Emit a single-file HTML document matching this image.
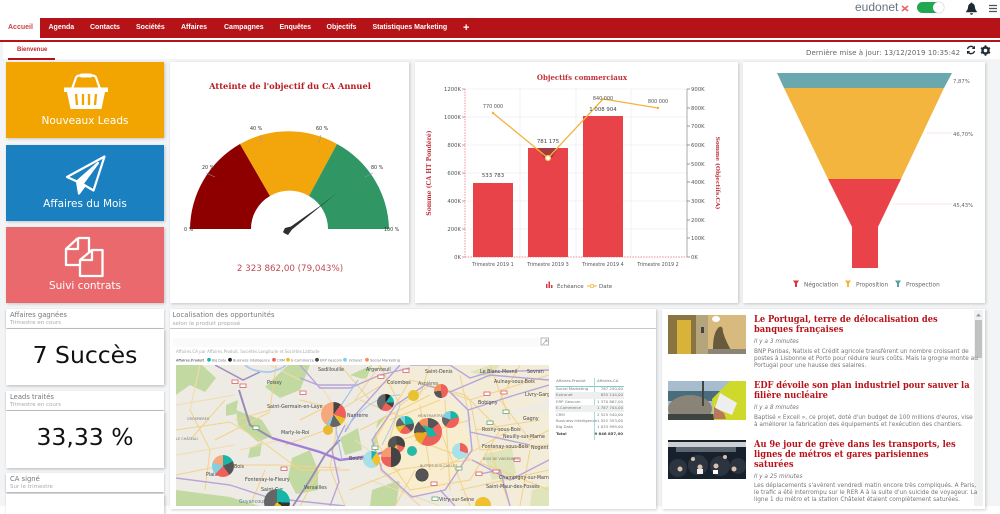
<!DOCTYPE html>
<html lang="fr"><head><meta charset="utf-8"><title>Eudonet</title>
<style>
*{box-sizing:border-box}
html,body{margin:0;padding:0;width:1000px;height:506px;overflow:hidden;background:#fff;font-family:"DejaVu Sans","Liberation Sans",sans-serif}
.a{position:absolute}
.t{position:absolute;white-space:nowrap}
.tab{position:absolute;top:18px;height:20px;color:#fff;font:bold 7px/20px "Liberation Sans",sans-serif;white-space:nowrap}
.card{position:absolute;background:#fff;box-shadow:1px 1px 3px rgba(0,0,0,.2)}
.tile{position:absolute;left:6px;width:158px;height:76px;box-shadow:1px 1px 3px rgba(0,0,0,.2);color:#fff;text-align:center;font-size:10.5px}
.tile span{position:absolute;left:0;right:0;top:53px}
.kh{position:absolute;left:6px;width:158px;height:19px;background:#fff;box-shadow:0 1px 2px rgba(0,0,0,.3)}
.kh b{position:absolute;left:4px;top:1.5px;font:normal 6.8px "DejaVu Sans",sans-serif;color:#777;white-space:nowrap}
.kh i{position:absolute;left:4px;top:11px;font:normal 5.5px "DejaVu Sans",sans-serif;color:#aaa;white-space:nowrap}
.kb{position:absolute;left:6px;width:158px;background:#fff;box-shadow:1px 1px 3px rgba(0,0,0,.25);text-align:center;color:#111;font-size:23.5px}
.p{position:absolute;border-radius:50%}
.nt{position:absolute;left:754px;font:bold 9.6px/10px "DejaVu Serif",serif;color:#b81219;white-space:nowrap;transform:scaleX(.865);transform-origin:left center}
.nd{position:absolute;left:754px;font:italic 5.8px "DejaVu Sans",sans-serif;color:#777;white-space:nowrap}
.nx{position:absolute;left:754px;width:217px;font:5.8px/7px "DejaVu Sans",sans-serif;color:#777;white-space:nowrap}
svg text{font-family:"DejaVu Sans",sans-serif}
.tr{position:absolute;left:555px;width:69px;height:6.4px;font:3.9px/6.4px "DejaVu Sans",sans-serif;color:#777;padding-left:1px;white-space:nowrap}
.tr u{position:absolute;right:1px;text-decoration:none}
</style></head><body>

<!-- top header -->
<div class="t" style="left:855px;top:0;font:12px/15px 'Liberation Sans',sans-serif;color:#68747c">eudonet</div>
<svg class="a" style="left:900px;top:3px" width="10" height="10"><path d="M2 3 8 8M8 3 2 8" stroke="#e8636a" stroke-width="1.6"/></svg>
<div class="a" style="left:917px;top:2px;width:27px;height:11px;border-radius:6px;background:#1fa84f"></div>
<div class="a" style="left:933px;top:2px;width:11px;height:11px;border-radius:50%;background:#fff;box-shadow:0 0 1px #888"></div>
<svg class="a" style="left:965px;top:2px" width="13" height="13" viewBox="0 0 13 13"><path d="M6.5 0.5c.7 0 1 .5 1 1 2 .6 2.300 2.300 2.500 4 .2 1.700.8 2.800 1.800 3.800v1H1.200v-1c1-1 1.600-2.100 1.800-3.800.2-1.700.5-3.400 2.500-4 0-.5.3-1 1-1zM5 11.200h3c0 1-.7 1.500-1.500 1.500S5 12.200 5 11.200z" fill="#1d2a33"/></svg>
<svg class="a" style="left:988px;top:4px" width="10" height="9"><path d="M1 1.500h8M1 4.500h8M1 7.500h8" stroke="#4a5358" stroke-width="1.300"/></svg>

<!-- nav -->
<div class="a" style="left:0;top:18px;width:1000px;height:20px;background:#b51317"></div>
<div class="a" style="left:0;top:18px;width:40px;height:20px;background:#fff"></div>
<div class="a" style="left:0;top:40px;width:1000px;height:1.500px;background:#b51317"></div>
<div class="tab" style="left:8px;color:#c6484c">Accueil</div>
<div class="tab" style="left:48.500px">Agenda</div>
<div class="tab" style="left:90px">Contacts</div>
<div class="tab" style="left:136px">Sociétés</div>
<div class="tab" style="left:181px">Affaires</div>
<div class="tab" style="left:224px">Campagnes</div>
<div class="tab" style="left:279.500px">Enquêtes</div>
<div class="tab" style="left:326.500px">Objectifs</div>
<div class="tab" style="left:372.500px">Statistiques Marketing</div>
<div class="tab" style="left:463px;font-size:11px">+</div>

<!-- content background -->
<div class="a" style="left:0;top:42px;width:1000px;height:464px;background:#f3f4f6"></div>
<div class="a" style="left:3px;top:42px;width:997px;height:17px;background:#fff"></div>
<div class="t" style="left:17px;top:47px;font:bold 6px 'Liberation Sans',sans-serif;color:#c0272d">Bienvenue</div>
<div class="a" style="left:8px;top:58px;width:47px;height:1.500px;background:#b51317"></div>
<div class="t" style="left:806px;top:47.500px;font-size:7.050px;color:#666;letter-spacing:.08px">Dernière mise à jour: 13/12/2019 10:35:42</div>
<svg class="a" style="left:966px;top:45px" width="10" height="10" viewBox="0 0 10 10"><path d="M1.500 4A3.600 3.600 0 0 1 8 3M8.500 6A3.600 3.600 0 0 1 2 7" fill="none" stroke="#1d2a33" stroke-width="1.400"/><path d="M9 .8V4H5.800zM1 9.200V6h3.200z" fill="#1d2a33"/></svg>
<svg class="a" style="left:980px;top:45px" width="11" height="11" viewBox="0 0 11 11"><circle cx="5.500" cy="5.500" r="3.100" fill="none" stroke="#1d2a33" stroke-width="2.200"/><path d="M5.500 .3v10.400M1 2.900l9 5.200M1 8.100l9-5.200" stroke="#1d2a33" stroke-width="1.700"/><circle cx="5.500" cy="5.500" r="1.800" fill="#fff"/></svg>

<!-- tiles -->
<div class="tile" style="top:62px;background:#f2a500"><span>Nouveaux Leads</span>
<svg class="a" style="left:57px;top:10px" width="46" height="40" viewBox="0 0 46 40"><path d="M9 17 13 5.500Q14 3.500 17 3.500H29Q32 3.500 33 5.500L37 17" fill="none" stroke="#fff" stroke-width="2.200"/><rect x="17" y="1.500" width="12" height="4" rx="1.500" fill="#fff"/><path d="M1 15.500H45V20H42L38.500 37H7.500L4 20H1z" fill="#fff"/><path d="M13 22 14 33M20 22V33M26 22V33M33 22 32 33" stroke="#f2a500" stroke-width="2.300"/></svg></div>
<div class="tile" style="top:144.500px;background:#1a80bf"><span>Affaires du Mois</span>
<svg class="a" style="left:58px;top:10px" width="42" height="40" viewBox="0 0 42 40"><path d="M40.500 1.500 3 22 13 26.500 34 8 18.500 29 29.500 35.500zM13 26.500 15 38.500 20.500 31 18.500 29" fill="#fff" fill-opacity="0" stroke="#fff" stroke-width="2.200" stroke-linejoin="round"/><path d="M13 26.500 15 38.500 20.500 31 18.500 29 34 8z" fill="#fff"/></svg></div>
<div class="tile" style="top:227px;background:#e9696c"><span>Suivi contrats</span>
<svg class="a" style="left:58px;top:9px" width="42" height="42" viewBox="0 0 42 42"><path d="M14 2H25V18M14 2 2 13V29H15M14 2V13H2" fill="none" stroke="#fff" stroke-width="2.300" stroke-linejoin="round"/><path d="M28 14H38.500V40H16V24zM28 14V24H16" fill="#e9696c" stroke="#fff" stroke-width="2.300" stroke-linejoin="round"/></svg></div>

<!-- gauge -->
<div class="card" style="left:170px;top:62px;width:239px;height:241px"></div>
<svg class="a" style="left:170px;top:62px" width="240" height="242" viewBox="170 62 240 242">
<text x="290" y="89" text-anchor="middle" style="font:bold 8.300px 'DejaVu Serif',serif" fill="#b81b22">Atteinte de l'objectif du CA Annuel</text>
<path d="M190 229A99 99 0 0 1 240 144L270 196A38 38 0 0 0 251 229Z" fill="#8e0000"/>
<path d="M240 144A99 99 0 0 1 337 144L309 196A38 38 0 0 0 270 196Z" fill="#f2a60b"/>
<path d="M337 144A99 99 0 0 1 389 229H328A38 38 0 0 0 309 196Z" fill="#2f9664"/>
<path d="M261 135 261 143M321 135 319 143M206 173 215 177M373 173 365 177" stroke="#999" stroke-width=".6" fill="none"/>
<g font-size="4.800" fill="#333"><text x="184" y="231">0 %</text><text x="202" y="169">20 %</text><text x="250" y="130">40 %</text><text x="316" y="130">60 %</text><text x="371" y="169">80 %</text><text x="384" y="231">100 %</text></g>
<path d="M337 193 292 229.500 288 235 284 233 283 232 285 228 291 226.500 320 206z" fill="#2e2e2e"/>
<text x="290" y="271" text-anchor="middle" font-size="8.700" fill="#bf4a52">2 323 862,00 (79,043%)</text>
</svg>

<!-- bar chart -->
<div class="card" style="left:415px;top:62px;width:323px;height:241px"></div>
<svg class="a" style="left:415px;top:62px" width="324" height="242" viewBox="415 62 324 242">
<text x="582" y="80" text-anchor="middle" style="font:bold 7px 'DejaVu Serif',serif" fill="#c0333a">Objectifs commerciaux</text>
<g stroke="#eceff2" stroke-width=".8"><path d="M465 89H687M465 117H687M465 145H687M465 173H687M465 201H687M465 229H687M520 89V257M576 89V257M631 89V257M687 89V257"/></g>
<path d="M465 89V257M465 257H687" stroke="#e06670" stroke-width=".7" stroke-dasharray="1.500 1.200" fill="none"/>
<path d="M687 89V257" stroke="#999" stroke-width=".8"/>
<path d="M462 89h3M462 117h3M462 145h3M462 173h3M462 201h3M462 229h3M462 257h3" stroke="#e06670" stroke-width=".7"/>
<path d="M687 89h3M687 108h3M687 126h3M687 145h3M687 164h3M687 182h3M687 201h3M687 220h3M687 238h3M687 257h3" stroke="#777" stroke-width=".7"/>
<rect x="473" y="183" width="40" height="74" fill="#e9434a"/><rect x="528" y="148" width="40" height="109" fill="#e9434a"/><rect x="583" y="116" width="40" height="141" fill="#e9434a"/>
<path d="M538 148H558L552 158H544z" fill="#a73a3c"/>
<path d="M493 113 548 158 603 99 658 108" fill="none" stroke="#f2b33d" stroke-width="1.300"/>
<circle cx="493" cy="113" r="1.200" fill="#f2b33d"/><circle cx="603" cy="99" r="1.200" fill="#f2b33d"/><circle cx="658" cy="108" r="1.200" fill="#f2b33d"/>
<circle cx="548" cy="158" r="2.500" fill="#fff" stroke="#f2c25a" stroke-width="1.200"/>
<g font-size="5.300" fill="#555" text-anchor="end"><text x="461" y="91">1200K</text><text x="461" y="119">1000K</text><text x="461" y="147">800K</text><text x="461" y="175">600K</text><text x="461" y="203">400K</text><text x="461" y="231">200K</text><text x="461" y="259">0K</text></g>
<g font-size="5.300" fill="#555"><text x="691" y="91">900K</text><text x="691" y="110">800K</text><text x="691" y="128">700K</text><text x="691" y="147">600K</text><text x="691" y="166">500K</text><text x="691" y="184">400K</text><text x="691" y="203">300K</text><text x="691" y="222">200K</text><text x="691" y="240">100K</text><text x="691" y="259">0K</text></g>
<g font-size="4.900" fill="#555" text-anchor="middle"><text x="493" y="266">Trimestre 2019 1</text><text x="548" y="266">Trimestre 2019 3</text><text x="603" y="266">Trimestre 2019 4</text><text x="658" y="266">Trimestre 2019 2</text>
<text x="493" y="108">770 000</text><text x="603" y="100">840 000</text><text x="658" y="103">800 000</text></g>
<g font-size="5.400" fill="#444" text-anchor="middle"><text x="493" y="177">533 783</text><text x="548" y="143">781 175</text><text x="603" y="111">1 008 904</text></g>
<text transform="translate(431 173) rotate(-90)" text-anchor="middle" style="font:bold 6.100px 'DejaVu Serif',serif" fill="#c0333a">Somme (CA HT Pondéré)</text>
<text transform="translate(716 173) rotate(90)" text-anchor="middle" style="font:bold 5.900px 'DejaVu Serif',serif" fill="#c0333a">Somme (Objectifs.CA)</text>
<path d="M546 288V284h1.500v4zM548.500 288V281.500H550V288zM551 288V285h1.500v3z" fill="#d8353d"/>
<text x="557" y="288" font-size="5.500" fill="#555">Échéance</text>
<path d="M587 286H597" stroke="#f2b33d" stroke-width="1"/><circle cx="592" cy="286" r="1.600" fill="#fff" stroke="#f2b33d" stroke-width=".8"/>
<text x="599" y="288" font-size="5.500" fill="#555">Date</text>
</svg>

<!-- funnel -->
<div class="card" style="left:743px;top:62px;width:242px;height:241px"></div>
<svg class="a" style="left:743px;top:62px" width="243" height="242" viewBox="743 62 243 242">
<path d="M777 73H952L944 88H784z" fill="#6aa8ad"/>
<path d="M784 88H944L901 179H828z" fill="#f4b53e"/>
<path d="M828 179H901L878 227V268H852V227z" fill="#ea4249"/>
<path d="M926 133H952M893 204H952" stroke="#f3c9c3" stroke-width=".6"/>
<g font-size="5.300" fill="#666"><text x="953" y="83">7,87%</text><text x="953" y="136">46,70%</text><text x="953" y="207">45,43%</text></g>
<path d="M793 280.500h6l-2 3v3.500h-2v-3.500z" fill="#d8353d"/><path d="M845 280.500h6l-2 3v3.500h-2v-3.500z" fill="#f4b53e"/><path d="M895 280.500h6l-2 3v3.500h-2v-3.500z" fill="#5c9da3"/>
<g font-size="5.800" fill="#666"><text x="804" y="286.500">Négociation</text><text x="856" y="286.500">Proposition</text><text x="906" y="286.500">Prospection</text></g>
</svg>

<!-- KPI -->
<div class="kh" style="top:309px"><b>Affaires gagnées</b><i>Trimestre en cours</i></div>
<div class="kb" style="top:329px;height:56px;line-height:53px">7 Succès</div>
<div class="kh" style="top:391px"><b>Leads traités</b><i>Trimestre en cours</i></div>
<div class="kb" style="top:411px;height:57px;line-height:53px">33,33 %</div>
<div class="kh" style="top:473px"><b>CA signé</b><i>Sur le trimestre</i></div>
<div class="kb" style="top:494px;height:20px"></div>

<!-- map panel -->
<div class="card" style="left:170px;top:309px;width:486px;height:200px"></div>
<div class="a" style="left:170px;top:328px;width:486px;height:1px;background:#c8c8c8"></div>
<div class="t" style="left:172.500px;top:310.500px;font-size:6.750px;color:#777;letter-spacing:.1px">Localisation des opportunités</div>
<div class="t" style="left:172.500px;top:320.500px;font-size:5.600px;color:#aaa">selon le produit proposé</div>
<div class="a" style="left:173px;top:338px;width:366px;height:9px;background:#fafafa"></div>
<svg class="a" style="left:540px;top:337px" width="10" height="10"><rect x="1" y="1" width="7.500" height="7" fill="none" stroke="#999" stroke-width=".7"/><path d="M3 7 7 3M5 3H7V5" stroke="#999" stroke-width=".7" fill="none"/></svg>
<div class="t" style="left:176px;top:349px;font-size:4px;color:#aaa">Affaires.CA par Affaires.Produit, Sociétés.Longitude et Sociétés.Latitude</div>
<svg class="a" style="left:175px;top:356px" width="240" height="8"><g font-size="3.700" fill="#777"><text x="1" y="5.300" font-weight="bold" textLength="28" lengthAdjust="spacingAndGlyphs">Affaires.Produit</text><circle cx="34" cy="3.800" r="1.900" fill="#16b6a8"/><text x="37" y="5.300" textLength="14" lengthAdjust="spacingAndGlyphs">Big Data</text><circle cx="55" cy="3.800" r="1.900" fill="#222"/><text x="58" y="5.300" textLength="37" lengthAdjust="spacingAndGlyphs">Business Intelligence</text><circle cx="99" cy="3.800" r="1.900" fill="#f0605a"/><text x="102" y="5.300" textLength="8" lengthAdjust="spacingAndGlyphs">CRM</text><circle cx="113" cy="3.800" r="1.900" fill="#e6c229"/><text x="116" y="5.300" textLength="23" lengthAdjust="spacingAndGlyphs">E-Commerce</text><circle cx="142" cy="3.800" r="1.900" fill="#444"/><text x="145" y="5.300" textLength="22" lengthAdjust="spacingAndGlyphs">ERP Gescom</text><circle cx="170" cy="3.800" r="1.900" fill="#7fd0e0"/><text x="174" y="5.300" textLength="13" lengthAdjust="spacingAndGlyphs">Extranet</text><circle cx="192" cy="3.800" r="1.900" fill="#f58e5d"/><text x="195" y="5.300" textLength="30" lengthAdjust="spacingAndGlyphs">Social Marketing</text></g></svg>

<!-- map -->
<svg class="a" style="left:176px;top:365px;filter:blur(.35px)" width="373" height="141" viewBox="176 365 373 141">
<rect x="176" y="365" width="373" height="141" fill="#eeebe4"/>
<g fill="#c2daa1">
<path d="M176 365H202L216 378 205 392 190 385 176 395z"/>
<path d="M265 387 288 365H310L300 390 280 398z"/>
<path d="M236 410 262 420 272 436 258 442 238 425z"/>
<path d="M292 458 310 450 318 470 318 490 296 494 288 478z"/>
<path d="M176 490 230 497 260 506H176z"/>
<path d="M378 420 392 412 386 440 372 446z"/>
<path d="M340 438 358 428 362 450 345 455z"/>
<path d="M372 490 400 480 396 506H370z"/>
<path d="M532 490 549 486V506H530z"/>
<path d="M470 372 490 365H500L490 378z"/>
<path d="M484 454 512 448 516 474 492 480z"/>
<path d="M250 448 262 442 260 456 248 458z"/>
<path d="M226 405 238 400 236 414 226 416z"/>
<path d="M350 375 372 365 366 380z"/>
</g>
<g fill="#f8edcf"><path d="M398 402 430 395 462 412 470 445 450 490 415 495 385 470 375 430z"/><path d="M355 380 420 365 549 365V400L480 420 400 400z" opacity=".55"/><path d="M470 420 549 410V506H450z" opacity=".55"/></g>
<g fill="none" stroke="#f3d28a" stroke-width="1">
<path d="M176 430 230 422 260 440 300 470 350 470"/><path d="M176 475 225 465 280 465 340 468"/><path d="M276 365 270 410 235 420"/><path d="M380 365 400 405 430 385 470 400 549 375"/><path d="M400 405 380 470 420 506"/><path d="M470 400 480 450 549 445"/><path d="M415 440 500 470 549 490"/><path d="M340 408 330 468 345 506"/><path d="M300 400 340 410 390 380"/><path d="M440 430 470 506"/><path d="M415 470 395 506"/><path d="M500 400 530 440 549 430"/><path d="M430 395 360 430"/><path d="M440 470 510 430"/>
<path d="M410 380 465 395 500 430 470 480 410 490 375 440z"/>
<path d="M190 410 210 450 205 490M225 400 190 440M215 440 270 412M300 420 330 405M285 445 340 425M265 470 250 506M320 470 300 506M350 490 400 470M360 400 410 420M390 420 440 400M400 440 470 420M420 405 430 470M445 400 450 490M395 470 470 460M460 375 470 420M490 365 510 420M520 365 500 400M475 430 540 420M490 450 510 506M530 450 520 506M460 490 549 470M380 365 355 400M340 365 370 400M430 365 420 395"/>
<path d="M176 405 235 395M200 365 190 410M176 455 235 445M240 450 280 440M300 380 270 365M320 385 350 430M355 440 395 470M370 480 440 506" stroke="#f1dcab"/>
</g>
<g fill="none" stroke="#b7a5da" stroke-width="1.400">
<path d="M176 478 230 485 270 498 345 506"/><path d="M300 365 320 388 350 388 380 375 410 368"/><path d="M345 425 332 450 339 482 330 506"/><path d="M356 385 318 385 300 378"/><path d="M410 365 450 365 470 378 490 372 549 370"/><path d="M400 365 355 415 345 432"/>
<path d="M396 405 425 385 450 392 468 410 472 450 445 490 412 497 382 470 372 440z"/>
<path d="M450 392 490 375 549 380"/><path d="M468 410 515 395 549 385"/><path d="M470 432 530 445M472 460 510 480 549 460"/>
<path d="M440 490 455 506M475 475 500 470 510 506"/>
</g>
<path d="M215 365 243 380 260 372" fill="none" stroke="#9c8dc4" stroke-width="1.500"/>
<path d="M239 390 250 425 272 438" fill="none" stroke="#9a8ab5" stroke-width="2"/>
<path d="M272 438 320 452 340 460 370 456 385 452" fill="none" stroke="#a37ed6" stroke-width="2.400"/>
<path d="M293 506 310 480 325 455 340 440" fill="none" stroke="#9a8ab5" stroke-width="1.800"/>
<path d="M342 460 336 430 338 410 358 380" fill="none" stroke="#9cc0ec" stroke-width="1.100"/>
<path d="M245 365Q252 372 270 372 285 368 285 365" fill="none" stroke="#a9c9ef" stroke-width="1.800"/>
<path d="M345 430Q370 395 400 395 M382 445Q395 420 400 405" fill="none" stroke="#a9c9ef" stroke-width="1"/>
<g fill="#fff" stroke="#d9606a" stroke-width=".8"><rect x="232" y="380" width="6" height="3.500"/><rect x="240" y="384" width="6" height="3.500"/><rect x="300" y="391" width="6" height="3.500"/><rect x="378" y="375" width="6" height="3.500"/><rect x="403" y="369" width="6" height="3.500"/><rect x="281" y="467" width="6" height="3.500"/><rect x="484" y="392" width="6" height="3.500"/><rect x="501" y="391" width="6" height="3"/><rect x="514" y="458" width="6" height="3.500"/><rect x="476" y="472" width="6" height="3.500"/><rect x="493" y="470" width="6" height="3"/><rect x="431" y="482" width="6" height="3.500"/></g>
<g fill="#fff" stroke="#6aa56b" stroke-width=".8"><rect x="253" y="426" width="6" height="3.500"/><rect x="372" y="446" width="6" height="3.500"/><rect x="503" y="410" width="6" height="3.500"/><rect x="487" y="421" width="6" height="3.500"/><rect x="456" y="467" width="6" height="3"/><rect x="432" y="497" width="6" height="3.500"/></g>
<g font-size="4.800" fill="#444">
<text x="318" y="371">Sadillouille</text><text x="366" y="371">Argenteuil</text><text x="267" y="384">Poissy</text><text x="267" y="408">Saint-Germain-en-Laye</text><text x="281" y="434">Marly-le-Roi</text><text x="347" y="417">Nanterre</text><text x="349" y="460">Boulogne</text><text x="234" y="468">Bois</text><text x="206" y="476">Plaisir</text><text x="245" y="481">Fontenay-le-Fleury</text><text x="261" y="491">Saint-Cyr</text><text x="304" y="489">Versailles</text><text x="239" y="503" fill="#5c7fa5">Guyancourt</text><text x="425" y="373">Saint-Denis</text><text x="480" y="373">Le Blanc-Mesnil</text><text x="527" y="373">Sevran</text><text x="494" y="383">Aulnay-sous-Bois</text><text x="478" y="404">Bobigny</text><text x="525" y="396">Livry-Gargan</text><text x="482" y="431">Rosny-sous-Bois</text><text x="503" y="438">Neuilly-sur-Marne</text><text x="482" y="448">Fontenay-sous-Bois</text><text x="531" y="449">Nogent</text><text x="499" y="479">Champigny-sur-Marne</text><text x="486" y="488">Saint-Maur-des-Fossés</text><text x="439" y="501">Vitry-sur-Seine</text><text x="387" y="384">Colombes</text><text x="418" y="385" fill="#666">Asnières</text><text x="523" y="420">Gagny</text></g>
<g font-size="3.500" fill="#777"><text x="187" y="420">CROSPIERES</text><text x="176" y="440">LE CHÂTEAU</text><text x="418" y="417">MONTMARTRE</text><text x="420" y="467">BUTTES-AUX-CAILLES</text><text x="483" y="460">BOIS DE VINCENNES</text></g>
</svg>
<div class="a" style="left:176px;top:365px;width:373px;height:141px;overflow:hidden">
<div class="p" style="left:145px;top:37px;width:25px;height:25px;background:conic-gradient(#444 0 10%,#f0605a 10% 30%,#e6c229 30% 40%,#666 40% 55%,#7fd0e0 55% 60%,#f7a77c 60% 100%)"></div>
<div class="p" style="left:147px;top:60px;width:10px;height:10px;background:#eab92d"></div>
<div class="p" style="left:201px;top:29px;width:17px;height:17px;background:conic-gradient(#222 0 10%,#16b6a8 10% 25%,#444 25% 35%,#f0605a 35% 58%,#666 58% 100%)"></div>
<div class="p" style="left:232px;top:25px;width:11px;height:11px;background:#eac12f"></div>
<div class="p" style="left:258px;top:19px;width:14px;height:14px;background:conic-gradient(#f0605a 0 48%,#555 48% 74%,#f58e5d 74% 100%)"></div>
<div class="p" style="left:220px;top:51px;width:18px;height:18px;background:conic-gradient(#16b6a8 0 22%,#555 22% 38%,#f0605a 38% 60%,#e6c229 60% 72%,#666 72% 90%,#7fd0e0 90% 100%)"></div>
<div class="p" style="left:266px;top:46px;width:17px;height:17px;background:conic-gradient(#16b6a8 0 20%,#f0605a 20% 60%,#666 60% 80%,#7fd0e0 80% 100%)"></div>
<div class="p" style="left:238px;top:53px;width:28px;height:28px;background:conic-gradient(#555 0 14%,#f0605a 14% 58%,#e8a81f 58% 74%,#555 74% 88%,#f58e5d 88% 100%)"></div>
<div class="a" style="left:247px;top:60px;width:14px;height:12px;background:#16b6a8;clip-path:polygon(0 0,70% 30%,100% 90%,40% 100%)"></div>
<div class="p" style="left:276px;top:78px;width:16px;height:16px;background:conic-gradient(#f0605a 0 30%,#a9e1ea 30% 100%)"></div>
<div class="p" style="left:231px;top:81px;width:10px;height:10px;background:#28b9a6"></div>
<div class="p" style="left:212px;top:71px;width:17px;height:17px;background:conic-gradient(#444 0 30%,#f0605a 30% 45%,#e6c229 45% 60%,#555 60% 100%)"></div>
<div class="p" style="left:205px;top:82px;width:20px;height:20px;background:conic-gradient(#444 0 50%,#f0605a 50% 75%,#f59a70 75% 100%)"></div>
<div class="p" style="left:187px;top:86px;width:17px;height:17px;background:conic-gradient(#16b6a8 0 10%,#f2c22c 10% 40%,#a9dfe9 40% 100%)"></div>
<div class="p" style="left:240px;top:104px;width:12px;height:12px;background:#555;box-shadow:0 0 0 .5px #333"></div>
<div class="p" style="left:36px;top:90px;width:22px;height:22px;background:conic-gradient(#16b6a8 0 18%,#555 18% 40%,#f0605a 40% 62%,#7fd0e0 62% 80%,#f7a77c 80% 100%)"></div>
<div class="p" style="left:88px;top:124px;width:26px;height:26px;background:conic-gradient(#16b6a8 0 26%,#333 26% 36%,#e6c229 36% 60%,#666 60% 100%)"></div>
<div class="p" style="left:299px;top:132px;width:16px;height:16px;background:#f0c12f"></div>
</div>

<!-- table -->
<div class="t" style="left:556px;top:378px;font-size:3.900px;color:#777">Affaires.Produit</div>
<div class="t" style="left:597px;top:378px;font-size:3.900px;color:#777">Affaires.CA</div>
<div class="a" style="left:555px;top:385.500px;width:69px;height:.8px;background:#7fcfc9"></div>
<div class="a" style="left:594px;top:378px;width:.7px;height:62px;background:#a8dcd8"></div>
<div class="tr" style="top:386px">Social Marketing<u>767 250,00</u></div>
<div class="tr" style="top:392.400px;background:#eef0f0">Extranet<u>855 144,00</u></div>
<div class="tr" style="top:398.800px">ERP Gescom<u>1 370 867,00</u></div>
<div class="tr" style="top:405.200px;background:#eef0f0">E-Commerce<u>1 787 704,00</u></div>
<div class="tr" style="top:411.600px">CRM<u>2 525 540,00</u></div>
<div class="tr" style="top:418px">Business Intelligence<u>1 552 353,00</u></div>
<div class="tr" style="top:424.400px">Big Data<u>1 033 999,00</u></div>
<div class="tr" style="top:430.800px;font-weight:bold;color:#444">Total<u>9 846 857,00</u></div>

<!-- news -->
<div class="card" style="left:662px;top:309px;width:323px;height:200px"></div>
<div class="a" style="left:974px;top:310px;width:9px;height:196px;background:#f1f1f1"></div>
<div class="a" style="left:975px;top:320px;width:7px;height:38px;background:#c1c1c1"></div>
<svg class="a" style="left:976px;top:313px" width="5" height="4"><path d="M0 3.500 2.500 .5 5 3.500z" fill="#999"/></svg>

<svg class="a" style="left:668px;top:315px" width="78" height="39" viewBox="0 0 78 39"><rect width="78" height="39" fill="#d8b97e"/><rect width="32" height="39" fill="#8a7442"/><rect x="9" y="5" width="14" height="34" fill="#d9b23a"/><rect x="28" y="0" width="12" height="39" fill="#b5a57c"/><rect x="33" y="12" width="3" height="6" fill="#444"/><ellipse cx="48" cy="4" rx="4" ry="3" fill="#fff"/><path d="M45 37C45 25 46 18 50 13 53 10 55 12 55 17 57 24 60 30 64 37z" fill="#6a5a3c"/><path d="M40 34H78V39H40z" fill="#8a8576"/></svg>
<svg class="a" style="left:668px;top:381px" width="78" height="39" viewBox="0 0 78 39"><rect width="78" height="39" fill="#a7bccd"/><rect y="10" width="55" height="10" fill="#4a6d7c"/><ellipse cx="22" cy="28" rx="22" ry="14" fill="#8a8478"/><rect y="33" width="78" height="6" fill="#3d4440"/><rect x="34" y="0" width="2" height="25" fill="#444"/><path d="M46 39 44 18 62 0H78V39z" fill="#cfd92c"/><path d="M52 12 69 22 64 34 47 27z" fill="#eee"/><path d="M46 26 56 32 58 38 46 38z" fill="#b97760"/></svg>
<svg class="a" style="left:668px;top:440px" width="78" height="39" viewBox="0 0 78 39"><rect width="78" height="39" fill="#17202d"/><rect y="2" width="78" height="5" fill="#cdd0d3"/><rect x="8" y="7" width="60" height="5" fill="#5b6570"/><g fill="#2c3440"><circle cx="10" cy="28" r="9"/><circle cx="30" cy="25" r="10"/><circle cx="52" cy="26" r="10"/><circle cx="70" cy="26" r="8"/></g><g fill="#d9c0ae"><circle cx="12" cy="29" r="2.500"/><circle cx="32" cy="27" r="2.500"/><circle cx="48" cy="26" r="2.500"/><circle cx="66" cy="29" r="2.500"/><circle cx="25" cy="19" r="2"/><circle cx="57" cy="17" r="2"/></g><rect x="29" y="29" width="6" height="5" fill="#eee"/><rect x="45" y="30" width="5" height="4" fill="#fff"/></svg>

<div class="nt" style="top:315px">Le Portugal, terre de délocalisation des</div>
<div class="nt" style="top:325px">banques françaises</div>
<div class="nd" style="top:339px">Il y a 3 minutes</div>
<div class="nx" style="top:348.500px">BNP Paribas, Natixis et Crédit agricole transfèrent un nombre croissant de<br>postes à Lisbonne et Porto pour réduire leurs coûts. Mais la grogne monte au<br>Portugal pour une hausse des salaires.</div>
<div class="nt" style="top:381px">EDF dévoile son plan industriel pour sauver la</div>
<div class="nt" style="top:391px">filière nucléaire</div>
<div class="nd" style="top:405px">Il y a 8 minutes</div>
<div class="nx" style="top:414.500px">Baptisé « Excell », ce projet, doté d'un budget de 100 millions d'euros, vise<br>à améliorer la fabrication des équipements et l'exécution des chantiers.</div>
<div class="nt" style="top:440px">Au 9e jour de grève dans les transports, les</div>
<div class="nt" style="top:450px">lignes de métros et gares parisiennes</div>
<div class="nt" style="top:460px">saturées</div>
<div class="nd" style="top:474px">Il y a 25 minutes</div>
<div class="nx" style="top:483px">Les déplacements s'avèrent vendredi matin encore très compliqués. A Paris,<br>le trafic a été interrompu sur le RER A à la suite d'un suicide de voyageur. La<br>ligne 1 du métro et la station Châtelet étaient complètement saturées.</div>
</body></html>
